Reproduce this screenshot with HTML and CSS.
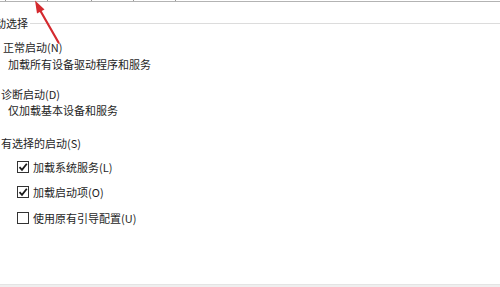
FILE: index.html
```html
<!DOCTYPE html>
<html lang="zh-CN">
<head>
<meta charset="utf-8">
<link rel="stylesheet" href="styles.css">
</head>
<body>
<div class="page">
  <div class="tabs">
    <span class="tab t0"></span>
    <span class="tab t1"></span>
    <span class="tab t2"></span>
    <span class="tab t3"></span>
    <span class="tab t4"></span>
  </div>
  <div class="content">
    <div class="group">
      <span class="legend">启动选择</span>
      <span class="rule"></span>
    </div>
    <div class="opt opt-normal">正常启动(N)</div>
    <div class="desc d1">加载所有设备驱动程序和服务</div>
    <div class="opt opt-diag">诊断启动(D)</div>
    <div class="desc d2">仅加载基本设备和服务</div>
    <div class="opt opt-sel">有选择的启动(S)</div>
    <div class="cb cb1"><span class="box"><svg viewBox="0 0 12 12" width="12" height="12"><path d="M2.5 6.2 L5 8.8 L9.8 2.8" fill="none" stroke="#1a1a1a" stroke-width="1.8"/></svg></span><span class="cbl">加载系统服务(L)</span></div>
    <div class="cb cb2"><span class="box"><svg viewBox="0 0 12 12" width="12" height="12"><path d="M2.5 6.2 L5 8.8 L9.8 2.8" fill="none" stroke="#1a1a1a" stroke-width="1.8"/></svg></span><span class="cbl">加载启动项(O)</span></div>
    <div class="cb cb3"><span class="box"></span><span class="cbl">使用原有引导配置(U)</span></div>
  </div>
  <div class="footer"></div>
  <svg class="arrow" width="80" height="50" viewBox="0 0 80 50">
    <path d="M40.5 11 L58.5 42.5" stroke="#d42a2f" stroke-width="2.2" stroke-linecap="round" fill="none"/>
    <polygon points="35,0.5 44.5,9.5 37,13.5" fill="#d42a2f"/>
  </svg>
</div>
</body>
</html>
```

FILE: styles.css
```css
html, body {
  margin: 0;
  padding: 0;
  background: #ffffff;
}
.page {
  position: relative;
  width: 500px;
  height: 287px;
  overflow: hidden;
  display: flex;
  flex-direction: column;
  font-family: "Noto Sans CJK SC", "Microsoft YaHei", sans-serif;
  font-size: 11px;
  color: #1e1e1e;
}
.tabs {
  display: flex;
  height: 1px;
  border-bottom: 1px solid #b3b3b3;
  flex: none;
}
.tab {
  display: block;
  height: 1px;
  border-right: 1px solid #9a9a9a;
}
.t0 { width: 5px; }
.t1 { width: 41px; }
.t2 { width: 43px; }
.t3 { width: 41px; }
.t4 { width: 41px; }
.content {
  flex: 1;
  display: flex;
  flex-direction: column;
}
.group {
  display: flex;
  align-items: center;
  height: 16px;
  margin-top: 13px;
  margin-left: -16px;
}
.legend {
  line-height: 16px;
  white-space: nowrap;
}
.rule {
  flex: 1;
  border-top: 1px solid #dcdcdc;
  margin-left: 2px;
}
.opt, .desc, .cb {
  line-height: 16px;
  height: 16px;
  white-space: nowrap;
}
.opt-normal { margin-top: 8px; padding-left: 3px; }
.d1 { margin-top: 1px; padding-left: 8px; }
.opt-diag { margin-top: 14px; padding-left: 1px; }
.d2 { margin-top: 0; padding-left: 8px; }
.opt-sel { margin-top: 17px; padding-left: 1px; }
.cb {
  display: flex;
  align-items: center;
  padding-left: 17px;
}
.cb1 { margin-top: 8px; }
.cb2 { margin-top: 9px; }
.cb3 { margin-top: 10px; }
.box {
  width: 10px;
  height: 10px;
  border: 1px solid #333333;
  background: #ffffff;
  position: relative;
  flex: none;
}
.box svg {
  position: absolute;
  left: -1px;
  top: -1px;
}
.cbl {
  margin-left: 4px;
}
.footer {
  flex: none;
  height: 2px;
  background: #efefef;
  border-top: 1px solid #e4e4e4;
}
.arrow {
  position: absolute;
  left: 0;
  top: 0;
}
```
